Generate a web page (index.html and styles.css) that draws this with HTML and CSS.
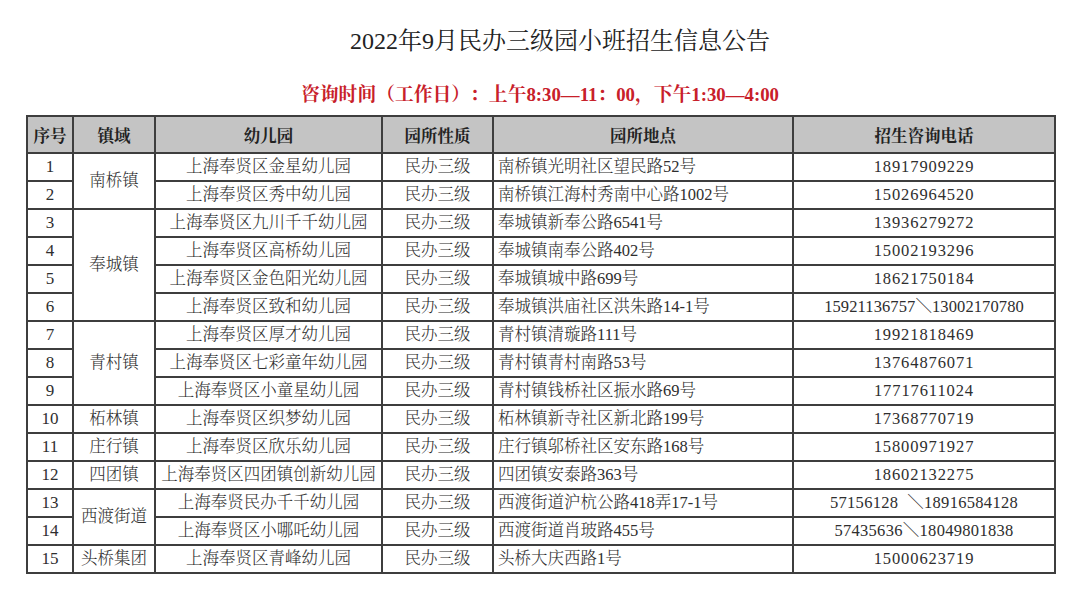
FILE: index.html
```html
<!DOCTYPE html>
<html>
<head>
<meta charset="utf-8">
<title>2022年9月民办三级园小班招生信息公告</title>
<link rel="stylesheet" href="styles.css">
</head>
<body>
<div class="page">
  <h1 class="title">2022年9月民办三级园小班招生信息公告</h1>
  <p class="notice">咨询时间（工作日）：上午8:30—11：00，下午1:30—4:00</p>
  <table class="grid">
    <colgroup>
      <col class="c-no"><col class="c-town"><col class="c-name"><col class="c-type"><col class="c-addr"><col class="c-tel">
    </colgroup>
    <thead>
      <tr><th>序号</th><th>镇域</th><th>幼儿园</th><th>园所性质</th><th>园所地点</th><th>招生咨询电话</th></tr>
    </thead>
    <tbody>
      <tr><td class="no">1</td><td class="town" rowspan="2">南桥镇</td><td class="name">上海奉贤区金星幼儿园</td><td class="type">民办三级</td><td class="addr">南桥镇光明社区望民路52号</td><td class="tel">18917909229</td></tr>
      <tr><td class="no">2</td><td class="name">上海奉贤区秀中幼儿园</td><td class="type">民办三级</td><td class="addr">南桥镇江海村秀南中心路1002号</td><td class="tel">15026964520</td></tr>
      <tr><td class="no">3</td><td class="town" rowspan="4">奉城镇</td><td class="name">上海奉贤区九川千千幼儿园</td><td class="type">民办三级</td><td class="addr">奉城镇新奉公路6541号</td><td class="tel">13936279272</td></tr>
      <tr><td class="no">4</td><td class="name">上海奉贤区高桥幼儿园</td><td class="type">民办三级</td><td class="addr">奉城镇南奉公路402号</td><td class="tel">15002193296</td></tr>
      <tr><td class="no">5</td><td class="name">上海奉贤区金色阳光幼儿园</td><td class="type">民办三级</td><td class="addr">奉城镇城中路699号</td><td class="tel">18621750184</td></tr>
      <tr><td class="no">6</td><td class="name">上海奉贤区致和幼儿园</td><td class="type">民办三级</td><td class="addr">奉城镇洪庙社区洪朱路14-1号</td><td class="tel tighter">15921136757＼13002170780</td></tr>
      <tr><td class="no">7</td><td class="town" rowspan="3">青村镇</td><td class="name">上海奉贤区厚才幼儿园</td><td class="type">民办三级</td><td class="addr">青村镇清璇路111号</td><td class="tel">19921818469</td></tr>
      <tr><td class="no">8</td><td class="name">上海奉贤区七彩童年幼儿园</td><td class="type">民办三级</td><td class="addr">青村镇青村南路53号</td><td class="tel">13764876071</td></tr>
      <tr><td class="no">9</td><td class="name">上海奉贤区小童星幼儿园</td><td class="type">民办三级</td><td class="addr">青村镇钱桥社区振水路69号</td><td class="tel">17717611024</td></tr>
      <tr><td class="no">10</td><td class="town">柘林镇</td><td class="name">上海奉贤区织梦幼儿园</td><td class="type">民办三级</td><td class="addr">柘林镇新寺社区新北路199号</td><td class="tel">17368770719</td></tr>
      <tr><td class="no">11</td><td class="town">庄行镇</td><td class="name">上海奉贤区欣乐幼儿园</td><td class="type">民办三级</td><td class="addr">庄行镇邬桥社区安东路168号</td><td class="tel">15800971927</td></tr>
      <tr><td class="no">12</td><td class="town">四团镇</td><td class="name">上海奉贤区四团镇创新幼儿园</td><td class="type">民办三级</td><td class="addr">四团镇安泰路363号</td><td class="tel">18602132275</td></tr>
      <tr><td class="no">13</td><td class="town" rowspan="2">西渡街道</td><td class="name">上海奉贤民办千千幼儿园</td><td class="type">民办三级</td><td class="addr">西渡街道沪杭公路418弄17-1号</td><td class="tel tight">57156128 &nbsp;＼18916584128</td></tr>
      <tr><td class="no">14</td><td class="name">上海奉贤区小哪吒幼儿园</td><td class="type">民办三级</td><td class="addr">西渡街道肖玻路455号</td><td class="tel tight">57435636＼18049801838</td></tr>
      <tr><td class="no">15</td><td class="town">头桥集团</td><td class="name">上海奉贤区青峰幼儿园</td><td class="type">民办三级</td><td class="addr">头桥大庆西路1号</td><td class="tel">15000623719</td></tr>
    </tbody>
  </table>
</div>
</body>
</html>
```

FILE: styles.css
```css
html, body {
  margin: 0;
  padding: 0;
  background: #ffffff;
}

.page {
  width: 1080px;
  height: 602px;
  overflow: hidden;
  font-family: "Liberation Serif", "Times New Roman", "DejaVu Serif", "Noto Serif CJK SC", "Noto Sans CJK SC", serif;
  color: #2e2e2e;
  text-spacing-trim: space-all;
}

.title {
  margin: 26px 0 0;
  padding-left: 40px;
  text-align: center;
  font-size: 24px;
  line-height: 30px;
  font-weight: normal;
  color: #222222;
}

.notice {
  margin: 27px 0 0;
  text-align: center;
  font-size: 18.8px;
  line-height: 24px;
  font-weight: bold;
  color: #c8202a;
}

.grid {
  margin: 8px 0 0 26px;
  width: 1028px;
  table-layout: fixed;
  border-collapse: collapse;
  border: 2px solid #333333;
}

.c-no { width: 46px; }
.c-town { width: 82px; }
.c-name { width: 227px; }
.c-type { width: 111px; }
.c-addr { width: 300px; }
.c-tel { width: 262px; }

.grid th,
.grid td {
  border: 2px solid #3e3e3e;
  padding: 0;
  text-align: center;
  vertical-align: middle;
  font-size: 16.5px;
  white-space: nowrap;
  overflow: hidden;
}

.grid th {
  height: 35px;
  background: #c4c4c4;
  font-weight: bold;
  color: #222222;
}

.grid td {
  height: 26px;
  line-height: 20px;
  font-weight: 300;
}

.grid td.addr {
  text-align: left;
  padding-left: 4px;
}

.grid td.tel {
  letter-spacing: 0.9px;
}

.grid td.tel.tight {
  letter-spacing: 0.3px;
}

.grid td.tel.tighter {
  letter-spacing: 0.1px;
}

.grid td.no {
  font-size: 17px;
}
```
